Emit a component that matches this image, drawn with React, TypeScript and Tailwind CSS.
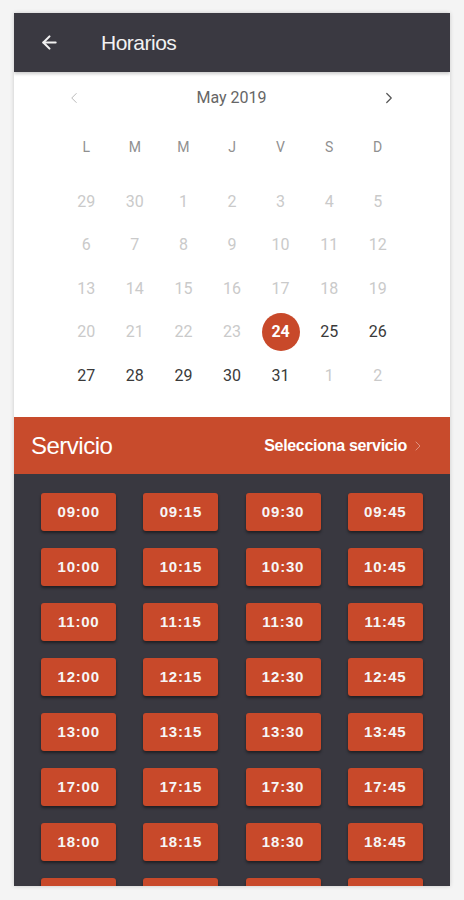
import React from 'react';
import { ArrowLeft, ChevronLeft, ChevronRight } from 'lucide-react';

const weekDays = ['L', 'M', 'M', 'J', 'V', 'S', 'D'];

type Day = { n: number; muted?: boolean; selected?: boolean };

const weeks: Day[][] = [
  [29, 30, 1, 2, 3, 4, 5].map((n) => ({ n, muted: true })),
  [6, 7, 8, 9, 10, 11, 12].map((n) => ({ n, muted: true })),
  [13, 14, 15, 16, 17, 18, 19].map((n) => ({ n, muted: true })),
  [
    { n: 20, muted: true },
    { n: 21, muted: true },
    { n: 22, muted: true },
    { n: 23, muted: true },
    { n: 24, selected: true },
    { n: 25 },
    { n: 26 },
  ],
  [
    { n: 27 },
    { n: 28 },
    { n: 29 },
    { n: 30 },
    { n: 31 },
    { n: 1, muted: true },
    { n: 2, muted: true },
  ],
];

const hours = ['09', '10', '11', '12', '13', '17', '18', '19'];
const minutes = ['00', '15', '30', '45'];

const App = () => {
  return (
    <div className="h-[900px] overflow-hidden bg-[#f4f4f4] px-[14px] pt-[13px]">
      <div className="h-[873px] overflow-hidden bg-white shadow-[0_0_4px_rgba(0,0,0,0.18)] font-['Liberation_Sans',Arial,sans-serif]">
        {/* header */}
        <div className="relative z-10 flex h-[59px] items-center bg-[#3a3941] pl-[25px] text-[#f2f2f2] shadow-[0_2px_3px_rgba(0,0,0,0.2)]">
          <ArrowLeft size={21} strokeWidth={2.4} />
          <span className="ml-[41px] text-[21px] tracking-[-0.5px]">Horarios</span>
        </div>

        {/* calendar */}
        <div className="h-[345px] bg-white font-['Roboto',Arial,sans-serif]">
          <div className="flex h-[52px] items-center justify-between pl-[51px] pr-[52px]">
            <ChevronLeft size={18} strokeWidth={1.3} className="text-[#b8b8b8]" />
            <span className="text-[16px] text-[#666]">May 2019</span>
            <ChevronRight size={18} strokeWidth={1.6} className="text-[#555]" />
          </div>
          <div className="mx-auto grid h-[46px] w-[340px] grid-cols-7 items-center text-center text-[14px] text-[#909090]">
            {weekDays.map((d, i) => (
              <span key={i}>{d}</span>
            ))}
          </div>
          <div className="mx-auto mt-[10px] w-[340px]">
            {weeks.map((week, wi) => (
              <div key={wi} className="grid h-[43.5px] grid-cols-7 items-center text-center text-[16px]">
                {week.map((d, di) => (
                  <div key={di} className="flex items-center justify-center">
                    {d.selected ? (
                      <span className="flex h-[38px] w-[38px] items-center justify-center rounded-full bg-[#c8492a] font-bold text-white">
                        {d.n}
                      </span>
                    ) : (
                      <span className={d.muted ? 'text-[#cacaca]' : 'text-[#3a3a3a]'}>{d.n}</span>
                    )}
                  </div>
                ))}
              </div>
            ))}
          </div>
        </div>

        {/* servicio bar */}
        <div className="flex h-[57px] items-center justify-between bg-[#c84b2c] pl-[17px] pr-[24px] text-white">
          <span className="text-[24px] tracking-[-0.5px]">Servicio</span>
          <div className="flex items-center gap-[3px]">
            <span className="text-[16px] font-bold tracking-[-0.3px]">Selecciona servicio</span>
            <ChevronRight size={16} strokeWidth={1.5} className="text-white/40" />
          </div>
        </div>

        {/* times */}
        <div className="h-full bg-[#393840] pt-[19px]">
          {hours.map((h) => (
            <div key={h} className="mb-[17px] flex justify-evenly">
              {minutes.map((m) => (
                <button
                  key={m}
                  className="flex h-[38px] w-[75px] items-center justify-center rounded-[3px] bg-[#c8492a] text-[15px] font-bold tracking-[0.8px] text-[#f6f6f6] shadow-[0_2px_3px_rgba(0,0,0,0.45)]"
                >
                  {h}:{m}
                </button>
              ))}
            </div>
          ))}
        </div>
      </div>
    </div>
  );
};

export default App;
